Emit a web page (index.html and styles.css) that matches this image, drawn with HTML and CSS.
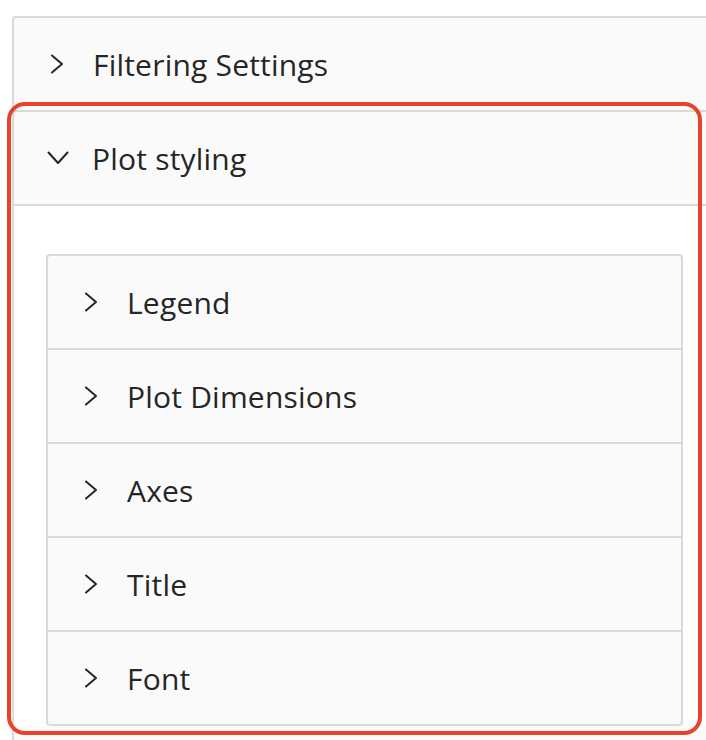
FILE: index.html
```html
<!DOCTYPE html>
<html>
<head>
<meta charset="utf-8">
<link rel="stylesheet" href="styles.css">
</head>
<body>
<div class="page">
  <div class="collapse outer">
    <div class="item">
      <div class="header">
        <svg class="chev" width="14" height="20" viewBox="0 0 14 20"><path d="M2 1.5 L12 10 L2 18.5" fill="none" stroke="#262626" stroke-width="2" stroke-linecap="round" stroke-linejoin="round"/></svg>
        <span class="label">Filtering Settings</span>
      </div>
    </div>
    <div class="item open">
      <div class="header">
        <svg class="chev down" width="22" height="14" viewBox="0 0 22 14"><path d="M1.5 1.5 L11 12 L20.5 1.5" fill="none" stroke="#262626" stroke-width="2" stroke-linecap="round" stroke-linejoin="round"/></svg>
        <span class="label">Plot styling</span>
      </div>
      <div class="content">
        <div class="collapse inner">
          <div class="item"><div class="header"><svg class="chev" width="14" height="20" viewBox="0 0 14 20"><path d="M2 1.5 L12 10 L2 18.5" fill="none" stroke="#262626" stroke-width="2" stroke-linecap="round" stroke-linejoin="round"/></svg><span class="label">Legend</span></div></div>
          <div class="item"><div class="header"><svg class="chev" width="14" height="20" viewBox="0 0 14 20"><path d="M2 1.5 L12 10 L2 18.5" fill="none" stroke="#262626" stroke-width="2" stroke-linecap="round" stroke-linejoin="round"/></svg><span class="label">Plot Dimensions</span></div></div>
          <div class="item"><div class="header"><svg class="chev" width="14" height="20" viewBox="0 0 14 20"><path d="M2 1.5 L12 10 L2 18.5" fill="none" stroke="#262626" stroke-width="2" stroke-linecap="round" stroke-linejoin="round"/></svg><span class="label">Axes</span></div></div>
          <div class="item"><div class="header"><svg class="chev" width="14" height="20" viewBox="0 0 14 20"><path d="M2 1.5 L12 10 L2 18.5" fill="none" stroke="#262626" stroke-width="2" stroke-linecap="round" stroke-linejoin="round"/></svg><span class="label">Title</span></div></div>
          <div class="item"><div class="header"><svg class="chev" width="14" height="20" viewBox="0 0 14 20"><path d="M2 1.5 L12 10 L2 18.5" fill="none" stroke="#262626" stroke-width="2" stroke-linecap="round" stroke-linejoin="round"/></svg><span class="label">Font</span></div></div>
        </div>
      </div>
    </div>
  </div>
  <div class="highlight"></div>
</div>
</body>
</html>
```

FILE: styles.css
```css
html, body {
  margin: 0;
  padding: 0;
  background: #ffffff;
  overflow: hidden;
}
.page {
  position: relative;
  width: 706px;
  height: 740px;
  overflow: hidden;
  padding-top: 16px;
  box-sizing: border-box;
  font-family: "Open Sans", "Noto Sans", sans-serif;
  color: #262626;
}
.collapse {
  background: #fafafa;
  border: 2px solid #d9d9d9;
  border-bottom: 0;
  border-radius: 4px;
}
.outer {
  margin-left: 12px;
  width: 701px;
  height: 800px;
}
.item {
  border-bottom: 2px solid #d9d9d9;
}
.header {
  display: flex;
  align-items: center;
  height: 92px;
  padding-left: 36px;
  font-size: 30px;
  letter-spacing: 0.2px;
  line-height: 44px;
}
.label {
  position: relative;
  top: 1px;
}
.chev {
  display: block;
  flex: none;
  margin-right: 29px;
}
.chev.down {
  margin-left: -3px;
  margin-right: 23px;
}
.content {
  background: #ffffff;
  border-top: 2px solid #d9d9d9;
  padding: 48px 32px 0 32px;
}
.open {
  border-bottom: 0;
}
.inner {
  width: 633px;
}
.inner .item:last-child {
  border-bottom: 2px solid #d9d9d9;
  border-radius: 0 0 4px 4px;
}
.highlight {
  position: absolute;
  left: 7px;
  top: 102px;
  width: 695px;
  height: 633px;
  box-sizing: border-box;
  border: 4px solid #ea412b;
  border-radius: 18px;
  pointer-events: none;
}
```
